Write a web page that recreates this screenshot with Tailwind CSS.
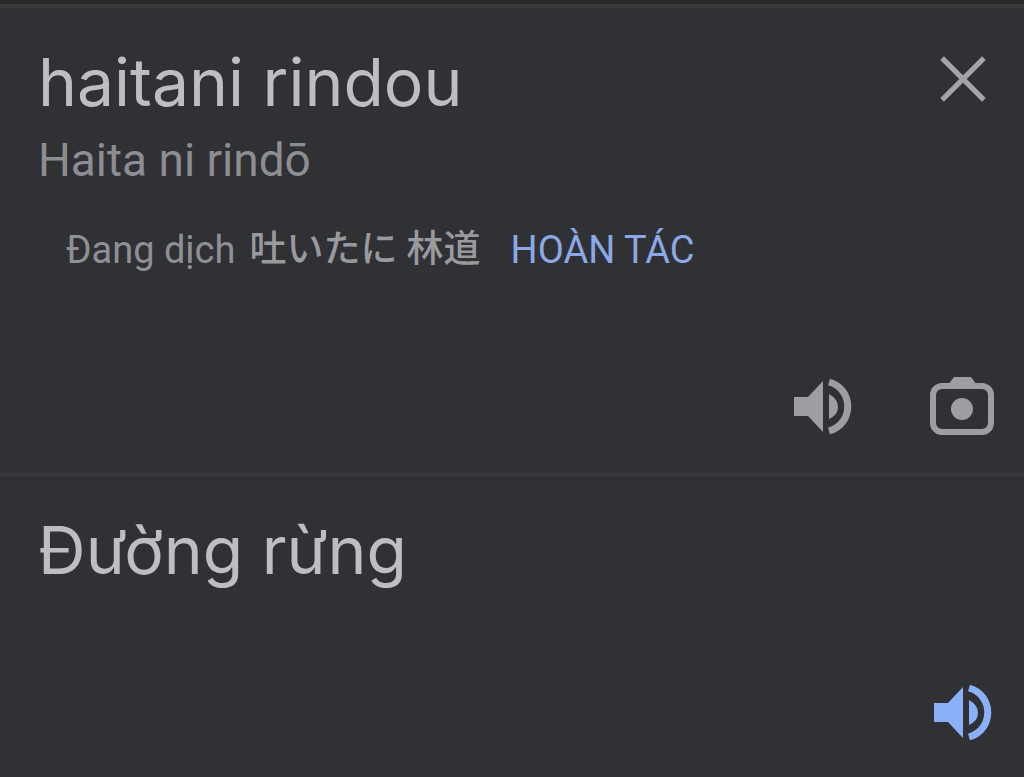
<!DOCTYPE html>
<html lang="vi">

<head>
    <meta charset="UTF-8" />
    <meta name="viewport" content="width=device-width, initial-scale=1.0" />
    <title>haitani rindou</title>
    <script src="https://cdn.jsdelivr.net/npm/@tailwindcss/browser@4"></script>
</head>

<body class="bg-[#303134] text-[#bdbec2] font-[Roboto,'Noto_Sans_CJK_JP',sans-serif] min-h-screen flex flex-col border-t-4 border-[#29292c]">

    <!-- Source text -->
    <section class="border-t-4 border-b-3 border-[#3a3a3d] flex flex-col pl-[38px] pr-[30px] pt-8 pb-9">
        <div class="flex items-start justify-between">
            <div>
                <h1 class="font-[Inter,sans-serif] text-[66px] leading-[84px]">haitani rindou</h1>
                <p class="text-[46px] leading-[72px] text-[#8d8e91]">Haita ni rindō</p>
            </div>
            <button type="button" aria-label="Xóa" class="p-2 pt-4 text-[#a3a4a8]">
                <svg class="size-[46px]" viewBox="0 0 44 44" fill="none" stroke="currentColor" stroke-width="5">
                    <path d="M2 2 42 42M42 2 2 42" />
                </svg>
            </button>
        </div>

        <div class="mt-[30px] ml-7 flex items-center text-[38px] leading-[48px]">
            <span class="text-[#8f9094]">Đang dịch</span>
            <span lang="ja" class="ml-[14px] text-[37px] font-medium text-[#999a9e]">吐いたに 林道</span>
            <a href="#" class="ml-[30px] text-[#8ba9e6]">HOÀN TÁC</a>
        </div>

        <div class="mt-[103px] flex items-center justify-end gap-[74px]">
            <button type="button" aria-label="Nghe văn bản nguồn" class="text-[#9d9ea4]">
                <svg class="w-[60px] h-[60px]" viewBox="0 0 60 60">
                    <path fill="currentColor" d="M0 20H14L29 4V55L14 39H0ZM35 17Q44 22 44 30T35 42Z" />
                    <path fill="none" stroke="currentColor" stroke-width="7" d="M35 5C60 12 60 47 35 54" />
                </svg>
            </button>
            <button type="button" aria-label="Máy ảnh" class="text-[#9d9ea4]">
                <svg class="w-[66px] h-[60px]" viewBox="0 0 66 60">
                    <rect x="5" y="9" width="58" height="46" rx="9" fill="none" stroke="currentColor" stroke-width="6" />
                    <path fill="currentColor" d="M20 8 26 0H43L49 8Z" />
                    <circle cx="34" cy="32" r="11" fill="currentColor" />
                </svg>
            </button>
        </div>
    </section>

    <!-- Translation -->
    <section class="flex-1 flex flex-col pl-[38px] pr-[30px] pt-8 pb-[34px]">
        <h2 class="font-[Inter,sans-serif] text-[66px] leading-[84px]">Đường rừng</h2>
        <div class="mt-auto flex justify-end">
            <button type="button" aria-label="Nghe bản dịch" class="text-[#8ab0f8]">
                <svg class="w-[60px] h-[60px]" viewBox="0 0 60 60">
                    <path fill="currentColor" d="M0 20H14L29 4V55L14 39H0ZM35 17Q44 22 44 30T35 42Z" />
                    <path fill="none" stroke="currentColor" stroke-width="7" d="M35 5C60 12 60 47 35 54" />
                </svg>
            </button>
        </div>
    </section>

</body>

</html>
